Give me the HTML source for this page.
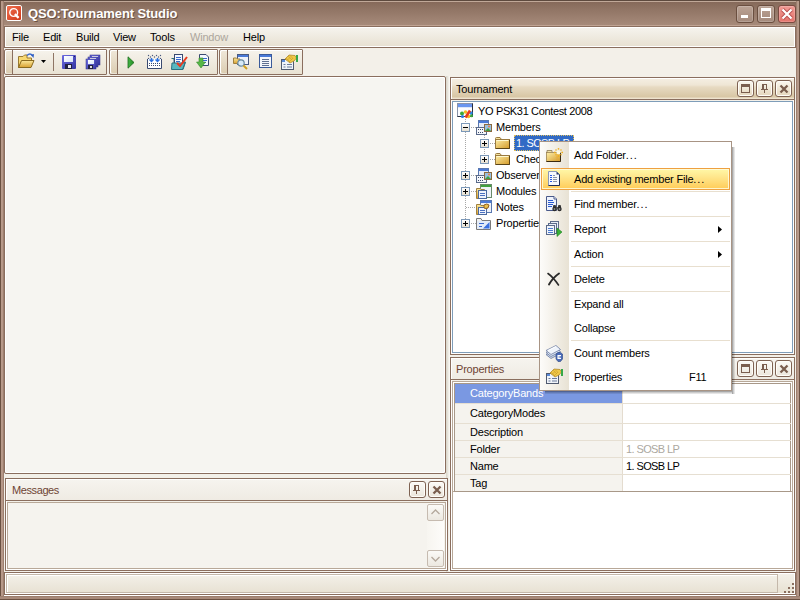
<!DOCTYPE html>
<html><head><meta charset="utf-8">
<style>
*{margin:0;padding:0;box-sizing:border-box}
html,body{width:800px;height:600px;overflow:hidden;background:#f3f0e9}
body{font-family:"Liberation Sans",sans-serif;font-size:11px;line-height:13px;color:#000;position:relative;letter-spacing:-0.2px}
.dots{letter-spacing:0.9px}
.a{position:absolute}
svg{position:absolute;overflow:visible}
#title{left:0;top:0;width:800px;height:26px;background:linear-gradient(#5e4a3e 0,#5e4a3e 1px,#c0a898 1px,#c0a898 2px,#86695a 2px,#8c7060 6px,#a68a7a 25px,#c0a494 25px)}
#ttext{letter-spacing:-0.1px;left:28px;top:6px;font-weight:bold;font-size:13px;line-height:16px;color:#fff;text-shadow:1px 1px 0 #6a5040}
.box{border:1px solid #8a6e5e;box-shadow:inset 1px 1px 0 #fff,inset -1px -1px 0 #fff}
#menubar{left:4px;top:26px;width:792px;height:22px;background:linear-gradient(#f6f4ef,#e7e0d1)}
.mi{top:31px}
.tb{top:49px;height:26px;background:linear-gradient(#f6f3ec,#e9e2d3);border:1px solid #8a6e5e;border-radius:2px 1px 1px 2px;box-shadow:inset 1px 1px 0 #fff}
.grip{left:1px;top:1px;width:7px;height:22px;background:linear-gradient(#efe7d8,#dccdb2);border-radius:2px}
.gripl{left:7px;top:0;width:1px;height:24px;background:#8a6e5e}
.panel{border:1px solid #8a6e5e;border-radius:2px;background:#f6f5f1;box-shadow:inset 1px 1px 0 #fff,inset -1px -1px 0 #fff}
.hdr{background:linear-gradient(#f5efe3 0,#efe6d5 7px,#e7dac2 9px,#d8c6a4 19px,#ece0ca 20px,#efe5d2 21px)}
.hdri{background:linear-gradient(#f6f4ef,#efebe3)}
.pb{width:17px;height:17px;border:1px solid #7e6252;border-radius:3px;background:linear-gradient(#fbf8f0,#e4d6bc);box-shadow:inset 0 0 0 1px #fffdf8}
.pbi{background:linear-gradient(#fbfaf6,#ebe6dc)}
.tbtn{width:18px;height:18px;border:1px solid #6b4f40;border-radius:3px;background:linear-gradient(#bba395,#a48a7c);box-shadow:inset 0 0 0 1px rgba(255,255,255,0.18)}
.exp{width:9px;height:9px;border:1px solid #7b98b8;background:linear-gradient(#fff,#e6dfd0)}
.exp i{position:absolute;background:#000}
.exp i.h{left:1px;top:3px;width:5px;height:1px}
.exp i.v{left:3px;top:1px;width:1px;height:5px}
.mtxt{left:574px}
.sep{left:571px;width:159px;height:1px;background:#e8dfcf}
.grow{left:455px;width:336px;height:1px;background:#e6dfd2}
</style></head><body>
<div id="title" class="a"></div>
<!-- frame -->
<div class="a" style="left:0;top:0;width:4px;height:600px;background:linear-gradient(90deg,#6b5142 0,#6b5142 1px,#b89b8c 1px,#b49686 3px,#9d7f6f 3px)"></div>
<div class="a" style="left:796px;top:0;width:4px;height:600px;background:linear-gradient(90deg,#9d7f6f 0,#9d7f6f 1px,#b49686 1px,#b89b8c 3px,#6b5142 3px)"></div>
<div class="a" style="left:0;top:596px;width:800px;height:4px;background:linear-gradient(#9d7f6f 0,#9d7f6f 1px,#a88a7a 1px,#a88a7a 3px,#6b5142 3px)"></div>
<div class="a" style="left:0;top:0;width:800px;height:1px;background:#5e4a3e"></div>
<!-- app icon -->
<div class="a" style="left:6px;top:5px;width:16px;height:16px;border:1px solid #fff;border-radius:2px;background:linear-gradient(135deg,#f07050,#d03818)"></div>
<svg style="left:6px;top:5px" width="16" height="16"><circle cx="7.7" cy="7.5" r="3.9" fill="none" stroke="#fff" stroke-width="1.4"/><path d="M8.8 9.2 L12.6 12.8" stroke="#fff" stroke-width="2.3"/></svg>
<div id="ttext" class="a">QSO:Tournament Studio</div>
<!-- title buttons -->
<div class="a tbtn" style="left:736px;top:5px"></div>
<div class="a" style="left:741px;top:15px;width:7px;height:3px;background:#fff"></div>
<div class="a tbtn" style="left:757px;top:5px"></div>
<div class="a" style="left:761px;top:8px;width:10px;height:10px;border:1px solid #fff;border-top-width:3px"></div>
<div class="a tbtn" style="left:778px;top:5px;background:linear-gradient(#f09a94,#e4746c);border-color:#7a4a40"></div>
<svg style="left:778px;top:5px" width="18" height="18"><path d="M4.5 4.5 L13.5 13.5 M13.5 4.5 L4.5 13.5" stroke="#b85050" stroke-width="4"/><path d="M4.5 4.5 L13.5 13.5 M13.5 4.5 L4.5 13.5" stroke="#fff" stroke-width="2.2"/></svg>

<div id="menubar" class="a box"></div>
<div class="a mi" style="left:12px">File</div>
<div class="a mi" style="left:43px">Edit</div>
<div class="a mi" style="left:76px">Build</div>
<div class="a mi" style="left:113px">View</div>
<div class="a mi" style="left:150px">Tools</div>
<div class="a mi" style="left:190px;color:#aca69c">Window</div>
<div class="a mi" style="left:243px">Help</div>

<div class="a tb" style="left:4px;width:103px"><div class="a grip"></div><div class="a gripl"></div></div>
<div class="a tb" style="left:109px;width:109px"><div class="a grip"></div><div class="a gripl"></div></div>
<div class="a tb" style="left:219px;width:84px"><div class="a grip"></div><div class="a gripl"></div></div>

<!-- toolbar icons -->
<svg style="left:18px;top:53px" width="17" height="16">
<path d="M0.5 3.5 H5 L6.5 2 H9 V5 H13.5 V8 H4 L1 14.5 H0.5Z" fill="#f8d870" stroke="#9a7a30"/>
<path d="M3.5 7.5 H16 L13 14.5 H0.5Z" fill="url(#gf)" stroke="#8a6a20"/>
<path d="M9 2.5 Q12 -0.5 14.5 2.5" stroke="#3a6ad0" stroke-width="1.5" fill="none"/><path d="M13 2 L16 1 L15.5 5Z" fill="#2a5ac0"/>
</svg>
<svg style="left:41px;top:60px" width="6" height="4"><path d="M0 0 H5 L2.5 3Z" fill="#000"/></svg>
<div class="a" style="left:53px;top:53px;width:1px;height:18px;background:#8e7565"></div>
<svg style="left:62px;top:55px" width="14" height="14"><defs><linearGradient id="gd1" x1="0" y1="0" x2="1" y2="1"><stop offset="0" stop-color="#6a6ae0"/><stop offset="1" stop-color="#3434a0"/></linearGradient></defs><rect x="0" y="0" width="14" height="14" rx="1" fill="url(#gd1)"/><rect x="2" y="1" width="9" height="6" fill="url(#gw)"/><rect x="3" y="9" width="7" height="5" fill="#202040"/><rect x="6" y="10" width="3" height="3" fill="#e8e8f0"/><rect x="12" y="1" width="1" height="1" fill="#202060"/></svg>
<svg style="left:86px;top:55px" width="14" height="14"><defs><linearGradient id="gd" x1="0" y1="0" x2="1" y2="1"><stop offset="0" stop-color="#7070e0"/><stop offset="1" stop-color="#3a3aa8"/></linearGradient></defs><rect x="4" y="0" width="10" height="10" fill="url(#gd)" stroke="#2a2a80" stroke-width="0.5"/><rect x="6" y="1" width="6" height="2" fill="#fff"/><rect x="2" y="2" width="10" height="10" fill="url(#gd)" stroke="#2a2a80" stroke-width="0.5"/><rect x="4" y="3" width="6" height="2" fill="#fff"/><rect x="0" y="4" width="10" height="10" fill="url(#gd)" stroke="#2a2a80" stroke-width="0.5"/><rect x="2" y="5" width="6" height="4" fill="url(#gw)"/><rect x="2" y="10" width="5" height="4" fill="#202040"/><rect x="4" y="11" width="2" height="2" fill="#ddd"/></svg>
<svg style="left:127px;top:56px" width="8" height="13"><defs><linearGradient id="gp" x1="0" y1="0" x2="1" y2="0"><stop offset="0" stop-color="#48b848"/><stop offset="1" stop-color="#208a20"/></linearGradient></defs><path d="M1 0.8 L7 6.5 L1 12.2Z" fill="url(#gp)" stroke="#1a6a1a" stroke-width="0.8"/></svg>
<svg style="left:147px;top:54px" width="16" height="15">
<g fill="#4a5a80"><circle cx="1.5" cy="1.5" r="0.7"/><circle cx="5.5" cy="1.5" r="0.7"/><circle cx="9.5" cy="1.5" r="0.7"/><circle cx="13.5" cy="1.5" r="0.7"/><circle cx="3.5" cy="3" r="0.7"/><circle cx="7.5" cy="3" r="0.7"/><circle cx="11.5" cy="3" r="0.7"/><circle cx="1.5" cy="4.5" r="0.7"/><circle cx="13.5" cy="4.5" r="0.7"/></g>
<path d="M0.5 5 V14.5 H14.5 V5" stroke="#3a4a70" fill="#fff"/>
<g fill="#3a4a70"><rect x="2" y="9" width="1" height="1"/><rect x="4" y="9" width="1" height="1"/><rect x="6" y="9" width="1" height="1"/><rect x="8" y="9" width="1" height="1"/><rect x="10" y="9" width="1" height="1"/><rect x="12" y="9" width="1" height="1"/><rect x="2" y="11" width="1" height="1"/><rect x="4" y="11" width="1" height="1"/><rect x="6" y="11" width="1" height="1"/><rect x="8" y="11" width="1" height="1"/><rect x="10" y="11" width="1" height="1"/><rect x="12" y="11" width="1" height="1"/></g>
<path d="M4.5 4 V7 M2.5 5.5 L4.5 7.5 L6.5 5.5 M10.5 4 V7 M8.5 5.5 L10.5 7.5 L12.5 5.5" stroke="#2a70e0" stroke-width="1.4" fill="none"/>
</svg>
<svg style="left:171px;top:54px" width="17" height="16">
<path d="M0.5 4.5 H3 V15.5 H12 L14.5 8 H10" fill="#50b0b8" stroke="#307080"/>
<rect x="3.5" y="0.5" width="8" height="10" fill="#f4f8ff" stroke="#3a4a70"/><path d="M5 3.5 H10 M5 5.5 H10 M5 7.5 H9" stroke="#3a6ad0"/>
<path d="M1 9 H14 L11.5 15.5 H0.5Z" fill="#58b8c0" stroke="#2a7080"/>
<path d="M6 9 L9 12 L16 3" stroke="#e83a20" stroke-width="2" fill="none"/>
</svg>
<svg style="left:196px;top:54px" width="13" height="15">
<path d="M3.5 0.5 H10 L12.5 3 V11.5 H3.5Z" fill="#f4f8ff" stroke="#3a4a70"/><path d="M5 4.5 H11 M5 6.5 H11 M5 8.5 H10" stroke="#3a6ad0"/>
<path d="M3 4 H7 V8 H9.5 L5 14 L0.5 8 H3Z" fill="#58b848" stroke="#3a8a30" stroke-width="0.6"/>
</svg>
<svg style="left:233px;top:54px" width="17" height="16">
<rect x="4.5" y="0.5" width="11" height="10" fill="#eef2fa" stroke="#4a5a80"/><rect x="5" y="1" width="10" height="2" fill="#4a7ad8"/>
<path d="M0.5 4 H3.5 L4.5 5 H7 V9.5 H0.5Z" fill="url(#gf)" stroke="#a08040"/>
<circle cx="8" cy="9" r="3.2" fill="#d8eaf8" stroke="#6a8aa0" stroke-width="1.2"/>
<path d="M10.5 11.5 L14 15" stroke="#d0a020" stroke-width="2"/>
</svg>
<svg style="left:259px;top:54px" width="13" height="14"><rect x="0.5" y="0.5" width="12" height="13" fill="#f4f6fa" stroke="#3a5a9a"/><rect x="1" y="1" width="11" height="2" fill="#4a7ad8"/><path d="M3 5.5 H10 M3 7.5 H10 M3 9.5 H10 M3 11.5 H10" stroke="#607090"/></svg>
<svg style="left:280px;top:54px" width="18" height="17"><rect x="1.5" y="5.5" width="12" height="10" fill="#f0f4fa" stroke="#505a70"/><rect x="2" y="6" width="3" height="2" fill="#5a8ad8"/><path d="M3.5 10.5 H5.5 M7 10.5 H12 M3.5 13 H5.5 M7 13 H12" stroke="#6a7a9a"/><path d="M5 5 L9 1 L15 1.5 L16.5 4 L14 7 L10 9Z" fill="#f0c848" stroke="#a88020" stroke-width="0.7"/><path d="M6 4 L10 8 M8 2 L12 6 M10 1.5 L13 4.5 M7 6.5 L10 3.5 M9 8 L13 4" stroke="#c89a28" stroke-width="0.6"/><rect x="16" y="1" width="2" height="7" fill="#38a848"/></svg>

<!-- document area -->
<div class="a" style="left:446px;top:76px;width:4px;height:496px;background:linear-gradient(90deg,#d9d5c9,#e4e1d8 35%,#f3f1eb 70%,#fbfaf7)"></div>
<div class="a panel" style="left:4px;top:76px;width:442px;height:398px"></div>
<!-- messages -->
<div class="a box" style="left:5px;top:478px;width:443px;height:93px;background:#f3f0e9"></div>
<div class="a hdri" style="left:6px;top:479px;width:441px;height:22px;border-bottom:1px solid #8a6e5e;box-shadow:inset 1px 1px 0 #fff"></div>
<div class="a" style="left:12px;top:484px;color:#6e4434;letter-spacing:-0.4px">Messages</div>
<div class="a pb pbi" style="left:409px;top:481px"></div>
<div class="a pb pbi" style="left:428px;top:481px"></div>
<div class="a" style="left:7px;top:502px;width:439px;height:67px;border:1px solid #b8a898;background:#f5f3ee"></div>

<!-- tournament -->
<div class="a box" style="left:450px;top:77px;width:345px;height:278px;background:#f3f0e9"></div>
<div class="a hdr" style="left:451px;top:78px;width:343px;height:22px;border-bottom:1px solid #8a6e5e;box-shadow:inset 1px 1px 0 #fff"></div>
<div class="a" style="left:456px;top:83px">Tournament</div>
<div class="a pb" style="left:737px;top:80px"></div>
<div class="a pb" style="left:756px;top:80px"></div>
<div class="a pb" style="left:775px;top:80px"></div>
<div class="a" style="left:452px;top:101px;width:341px;height:252px;border:1px solid #7f9db9;background:#fff"></div>

<!-- tree lines -->
<svg style="left:0;top:0" width="800" height="600">
<g stroke="#a8a8a8" stroke-width="1" stroke-dasharray="1 1" fill="none">
<path d="M465.5 119 V123 M465.5 132 V224 M471 127.5 H476 M484.5 135 V155 M490 143.5 H495 M490 159.5 H495 M471 175.5 H476 M471 191.5 H476 M466 207.5 H476 M471 223.5 H476"/>
</g>
</svg>
<!-- expanders -->
<div class="a exp" style="left:461px;top:123px"><i class="h"></i></div>
<div class="a exp" style="left:480px;top:139px"><i class="h"></i><i class="v"></i></div>
<div class="a exp" style="left:480px;top:155px"><i class="h"></i><i class="v"></i></div>
<div class="a exp" style="left:461px;top:171px"><i class="h"></i><i class="v"></i></div>
<div class="a exp" style="left:461px;top:187px"><i class="h"></i><i class="v"></i></div>
<div class="a exp" style="left:461px;top:219px"><i class="h"></i><i class="v"></i></div>
<!-- tree icons -->
<svg style="left:457px;top:103px" width="17" height="16">
<rect x="0.5" y="0.5" width="15" height="13" fill="#fbfcff" stroke="#8a94aa"/>
<path d="M15.5 0.5 V13.5 H0.5" stroke="#2a3040" fill="none"/>
<rect x="1" y="1" width="14" height="3" fill="#6a96f0"/><rect x="1" y="4" width="14" height="1" fill="#dce6f8"/>
<circle cx="5" cy="10.5" r="2" fill="#3aa83a"/><circle cx="8.5" cy="9" r="1.8" fill="#f4c020"/>
<circle cx="5.5" cy="13.5" r="1.6" fill="#2a7ae0"/><circle cx="11.5" cy="13.5" r="1.8" fill="#f4b820"/>
<circle cx="14" cy="10" r="1.7" fill="#2a8ae8"/><circle cx="14.5" cy="12.8" r="1.5" fill="#3aa83a"/>
<path d="M8.5 14.5 L13 7.5" stroke="#e83a20" stroke-width="2.6"/>
</svg>
<svg width="0" height="0"><defs>
<linearGradient id="gw" x1="0" y1="0" x2="1" y2="1"><stop offset="0" stop-color="#fff"/><stop offset="1" stop-color="#d8e4f8"/></linearGradient>
<linearGradient id="gfd" x1="0" y1="0" x2="1" y2="1"><stop offset="0" stop-color="#fdeea8"/><stop offset="1" stop-color="#d49a28"/></linearGradient>
<linearGradient id="gf" x1="0" y1="0" x2="0" y2="1"><stop offset="0" stop-color="#fce89c"/><stop offset="1" stop-color="#d8a030"/></linearGradient>
</defs></svg>
<!-- Members icon -->
<svg style="left:476px;top:120px" width="16" height="16">
<rect x="2.5" y="0.5" width="10" height="8" fill="#e8eef8" stroke="#5a78b0"/><rect x="3" y="1" width="9" height="2" fill="#4a7ad8"/>
<rect x="0.5" y="7.5" width="10" height="7" fill="#f4f6fa" stroke="#5a6a8a"/>
<g fill="#3a4a6a"><rect x="2" y="9" width="1" height="1"/><rect x="4" y="9" width="1" height="1"/><rect x="6" y="9" width="1" height="1"/><rect x="2" y="12" width="1" height="1"/><rect x="4" y="12" width="1" height="1"/><rect x="6" y="12" width="1" height="1"/></g>
<rect x="8.5" y="4.5" width="7" height="7" fill="#9ac0e0" stroke="#8a6a40"/><path d="M9 11 L12 8 L15 11Z" fill="#40a040"/><circle cx="13" cy="6.5" r="1" fill="#f08040"/>
</svg>
<!-- folders -->
<svg style="left:495px;top:137px" width="16" height="13"><path d="M0.5 3 V1.5 Q0.5 0.5 1.5 0.5 H5 L6.5 2.5" fill="#f6e4a0" stroke="#9a7a40"/><rect x="0.5" y="2.5" width="14" height="9" fill="url(#gfd)" stroke="#9a7a40"/><path d="M14.5 3 V11.5 H1" stroke="#5a4418" fill="none"/><path d="M1.5 3.5 H13.5" stroke="#fff8d0"/></svg>
<svg style="left:495px;top:153px" width="16" height="13"><path d="M0.5 3 V1.5 Q0.5 0.5 1.5 0.5 H5 L6.5 2.5" fill="#f6e4a0" stroke="#9a7a40"/><rect x="0.5" y="2.5" width="14" height="9" fill="url(#gfd)" stroke="#9a7a40"/><path d="M14.5 3 V11.5 H1" stroke="#5a4418" fill="none"/><path d="M1.5 3.5 H13.5" stroke="#fff8d0"/></svg>
<!-- Observers icon -->
<svg style="left:476px;top:168px" width="16" height="16">
<rect x="2.5" y="0.5" width="10" height="8" fill="#e8eef8" stroke="#5a78b0"/><rect x="3" y="1" width="9" height="2" fill="#4a7ad8"/>
<rect x="0.5" y="7.5" width="10" height="7" fill="#f4f6fa" stroke="#5a6a8a"/>
<g fill="#3a4a6a"><rect x="2" y="9" width="1" height="1"/><rect x="4" y="9" width="1" height="1"/><rect x="6" y="9" width="1" height="1"/><rect x="2" y="12" width="1" height="1"/><rect x="4" y="12" width="1" height="1"/><rect x="6" y="12" width="1" height="1"/></g>
<rect x="8.5" y="4.5" width="7" height="7" fill="#9ac0e0" stroke="#8a6a40"/><path d="M9 11 L12 8 L15 11Z" fill="#40a040"/><circle cx="13" cy="6.5" r="1" fill="#f08040"/>
</svg>
<!-- Modules icon -->
<svg style="left:476px;top:184px" width="16" height="16">
<rect x="4.5" y="0.5" width="11" height="13" fill="#eef2f8" stroke="#6a8a6a"/><rect x="5" y="1" width="10" height="2" fill="#40a040"/>
<path d="M0.5 4.5 H4 L5 5.5 H8.5 V14.5 H0.5Z" fill="url(#gf)" stroke="#a08040"/>
<rect x="2.5" y="6.5" width="8" height="8" fill="#f0f4fc" stroke="#4a6aa0"/><path d="M4 9.5 H9 M4 11.5 H9" stroke="#4a70c0"/>
</svg>
<!-- Notes icon -->
<svg style="left:476px;top:200px" width="16" height="16">
<rect x="4.5" y="0.5" width="11" height="12" fill="#eef2f8" stroke="#5a78b0"/><rect x="5" y="1" width="10" height="2" fill="#4a7ad8"/>
<path d="M0.5 4.5 H4 L5 5.5 H8.5 V14.5 H0.5Z" fill="url(#gf)" stroke="#a08040"/>
<rect x="2.5" y="7.5" width="8" height="7" fill="#f0f4fc" stroke="#4a6aa0"/><path d="M4 10.5 H9 M4 12.5 H9" stroke="#4a70c0"/>
<path d="M8 5 Q11 3 13 5 L12 8 Q10 9 8 8Z" fill="#e8c050" stroke="#906020"/>
</svg>
<!-- Properties icon -->
<svg style="left:476px;top:216px" width="16" height="16">
<path d="M0.5 2.5 H5 L6 4.5 H14.5 V13.5 H0.5Z" fill="#f0f0f0" stroke="#7a7a7a"/>
<rect x="1" y="5" width="13" height="8" fill="#e4ecf8"/>
<path d="M3 7.5 H8 M3 10.5 H6" stroke="#3a6ad0"/>
<path d="M7 12.5 L13.5 6 V12.5Z" fill="#3a70e0"/>
</svg>
<!-- tree text -->
<div class="a" style="left:478px;top:105px;letter-spacing:-0.35px">YO PSK31 Contest 2008</div>
<div class="a" style="left:496px;top:121px">Members</div>
<div class="a" style="left:514px;top:135px;width:60px;height:16px;background:#316ac5;outline:1px dotted #e0c060;outline-offset:-1px"></div>
<div class="a" style="left:516px;top:137px;color:#fff;letter-spacing:-0.6px">1. SOSB LP</div>
<div class="a" style="left:516px;top:153px">Check</div>
<div class="a" style="left:496px;top:169px">Observers</div>
<div class="a" style="left:496px;top:185px">Modules</div>
<div class="a" style="left:496px;top:201px">Notes</div>
<div class="a" style="left:496px;top:217px">Properties</div>

<!-- properties -->
<div class="a box" style="left:450px;top:357px;width:345px;height:214px;background:#f3f0e9"></div>
<div class="a hdri" style="left:451px;top:358px;width:343px;height:22px;border-bottom:1px solid #8a6e5e;box-shadow:inset 1px 1px 0 #fff"></div>
<div class="a" style="left:456px;top:363px;color:#6e4434">Properties</div>
<div class="a pb pbi" style="left:737px;top:360px"></div>
<div class="a pb pbi" style="left:756px;top:360px"></div>
<div class="a pb pbi" style="left:775px;top:360px"></div>
<div class="a" style="left:452px;top:381px;width:341px;height:188px;border:1px solid #b8a898;background:#fff"></div>
<!-- status bar -->
<div class="a box" style="left:4px;top:572px;width:792px;height:23px;background:linear-gradient(#f4f1ea,#e7e0d0)"></div>
<div class="a" style="left:4px;top:595px;width:792px;height:1px;background:#fff"></div>
<div class="a" style="left:6px;top:574px;width:772px;height:19px;border:1px solid #c4b8aa;box-shadow:inset 1px 1px 0 #fff;background:linear-gradient(#f3f0e8,#e8e2d4)"></div>

<!-- pane button glyphs -->
<svg style="left:0;top:0" width="800" height="600">
<g fill="#7a5e4e">
<rect x="741" y="84" width="9" height="3"/><rect x="741" y="87" width="1" height="5"/><rect x="749" y="87" width="1" height="5"/><rect x="741" y="92" width="9" height="1"/><rect x="762" y="84" width="5" height="1"/><rect x="762" y="85" width="2" height="4"/><rect x="766" y="85" width="1" height="4"/><rect x="761" y="89" width="7" height="1"/><rect x="764" y="90" width="1" height="3"/><rect x="741" y="364" width="9" height="3"/><rect x="741" y="367" width="1" height="5"/><rect x="749" y="367" width="1" height="5"/><rect x="741" y="372" width="9" height="1"/><rect x="762" y="364" width="5" height="1"/><rect x="762" y="365" width="2" height="4"/><rect x="766" y="365" width="1" height="4"/><rect x="761" y="369" width="7" height="1"/><rect x="764" y="370" width="1" height="3"/><rect x="414" y="485" width="5" height="1"/><rect x="414" y="486" width="2" height="4"/><rect x="418" y="486" width="1" height="4"/><rect x="413" y="490" width="7" height="1"/><rect x="416" y="491" width="1" height="3"/>
</g>
<g stroke="#7a5e4e" stroke-width="2.3">
<path d="M780.5 85.5 L787.5 92.5 M787.5 85.5 L780.5 92.5"/><path d="M780.5 365.5 L787.5 372.5 M787.5 365.5 L780.5 372.5"/><path d="M433.5 486.5 L440.5 493.5 M440.5 486.5 L433.5 493.5"/>
</g>
</svg>
<!-- messages scrollbar -->
<div class="a" style="left:427px;top:503px;width:17px;height:65px;background:linear-gradient(90deg,#f7f5f0,#fdfcfa)"></div>
<div class="a" style="left:427px;top:504px;width:17px;height:17px;border:1px solid #c6bbb0;border-radius:2px;background:linear-gradient(#fbfaf7,#ece8e0)"></div>
<div class="a" style="left:427px;top:550px;width:17px;height:17px;border:1px solid #c6bbb0;border-radius:2px;background:linear-gradient(#fbfaf7,#ece8e0)"></div>
<svg style="left:427px;top:504px" width="17" height="63"><path d="M4.5 10 L8.5 6 L12.5 10" stroke="#b4a89c" stroke-width="1.3" fill="none"/><path d="M4.5 53 L8.5 57 L12.5 53" stroke="#b4a89c" stroke-width="1.3" fill="none"/></svg>
<!-- status grip -->
<svg style="left:784px;top:581px" width="12" height="12"><g fill="#8a6e5e"><rect x="8" y="2" width="2" height="2"/><rect x="4" y="6" width="2" height="2"/><rect x="8" y="6" width="2" height="2"/><rect x="0" y="10" width="2" height="2"/><rect x="4" y="10" width="2" height="2"/><rect x="8" y="10" width="2" height="2"/></g></svg>

<!-- property grid -->
<div class="a" style="left:452px;top:381px;width:341px;height:111px;border:1px solid #b8a898;background:#fff"></div>
<div class="a" style="left:454px;top:383px;width:337px;height:109px;border:1px solid #a89888;background:#f5f3ee"></div>
<div class="a" style="left:623px;top:384px;width:167px;height:107px;background:#fff"></div>
<div class="a" style="left:455px;top:384px;width:167px;height:19px;background:#7a98e2"></div>
<div class="a" style="left:622px;top:384px;width:1px;height:107px;background:#e4dccf"></div>
<div class="a grow" style="top:403px"></div>
<div class="a grow" style="top:423px"></div>
<div class="a grow" style="top:440px"></div>
<div class="a grow" style="top:457px"></div>
<div class="a grow" style="top:474px"></div>
<div class="a" style="left:470px;top:387px;color:#fff">CategoryBands</div>
<div class="a" style="left:470px;top:407px">CategoryModes</div>
<div class="a" style="left:470px;top:426px">Description</div>
<div class="a" style="left:470px;top:443px">Folder</div>
<div class="a" style="left:470px;top:460px">Name</div>
<div class="a" style="left:470px;top:477px">Tag</div>
<div class="a" style="left:626px;top:443px;color:#aca89f;letter-spacing:-0.6px">1. SOSB LP</div>
<div class="a" style="left:626px;top:460px;letter-spacing:-0.6px">1. SOSB LP</div>

<!-- context menu -->
<div class="a" style="left:732px;top:147px;width:3px;height:247px;background:linear-gradient(90deg,rgba(0,0,0,0.42),rgba(0,0,0,0.2) 50%,rgba(0,0,0,0.05))"></div>
<div class="a" style="left:545px;top:391px;width:187px;height:3px;background:linear-gradient(rgba(0,0,0,0.42),rgba(0,0,0,0.2) 50%,rgba(0,0,0,0.05))"></div>
<div class="a" style="left:539px;top:141px;width:193px;height:250px;border:1px solid #a89484;background:#fff"></div>
<div class="a" style="left:540px;top:142px;width:29px;height:248px;background:linear-gradient(90deg,#fdfcfa,#e8e2d4)"></div>
<div class="a" style="left:541px;top:168px;width:189px;height:22px;border:1px solid #eea040;box-shadow:inset 0 0 0 1px rgba(255,252,220,0.85);background:linear-gradient(#fff8a8,#ffe488 45%,#ffcc58)"></div>
<div class="a sep" style="top:191px"></div>
<div class="a sep" style="top:216px"></div>
<div class="a sep" style="top:241px"></div>
<div class="a sep" style="top:266px"></div>
<div class="a sep" style="top:291px"></div>
<div class="a sep" style="top:340px"></div>
<div class="a mtxt" style="top:149px">Add Folder<span class="dots">...</span></div>
<div class="a mtxt" style="top:173px">Add existing member File<span class="dots">...</span></div>
<div class="a mtxt" style="top:198px">Find member<span class="dots">...</span></div>
<div class="a mtxt" style="top:223px">Report</div>
<div class="a mtxt" style="top:248px">Action</div>
<div class="a mtxt" style="top:273px">Delete</div>
<div class="a mtxt" style="top:298px">Expand all</div>
<div class="a mtxt" style="top:322px">Collapse</div>
<div class="a mtxt" style="top:347px">Count members</div>
<div class="a mtxt" style="top:371px">Properties</div>
<div class="a" style="left:689px;top:371px">F11</div>
<svg style="left:718px;top:226px" width="5" height="8"><path d="M0 0 L4 3.5 L0 7Z" fill="#000"/></svg>
<svg style="left:718px;top:251px" width="5" height="8"><path d="M0 0 L4 3.5 L0 7Z" fill="#000"/></svg>
<!-- menu icons -->
<svg style="left:546px;top:148px" width="17" height="16"><path d="M1 5 V2.5 H6 V4" fill="#f4e4a8" stroke="#8a7a58" stroke-width="0.8"/><rect x="0.5" y="4.5" width="14" height="9" fill="url(#gfd)" stroke="#9a8050" stroke-width="0.8"/><path d="M0.5 13.5 H14.5 V5" stroke="#3a2a10" fill="none"/><path d="M12 5.5 L10 10 M13 6 L10.5 12" stroke="#e8a830" stroke-width="0.7" opacity="0.6"/><g fill="#f0b020"><circle cx="12.5" cy="0.8" r="0.9"/><circle cx="12.5" cy="8" r="0.9"/><circle cx="8.8" cy="4.4" r="0.9"/><circle cx="16.2" cy="4.4" r="0.9"/><circle cx="10" cy="2" r="0.8"/><circle cx="15" cy="2" r="0.8"/><circle cx="10" cy="6.8" r="0.8"/><circle cx="15" cy="6.8" r="0.8"/></g><circle cx="12.5" cy="4.4" r="1.9" fill="#fffbe0"/></svg>
<svg style="left:548px;top:171px" width="13" height="15"><path d="M0.5 0.5 H8.5 L11.5 3.5 V14.5 H0.5Z" fill="#f6f8fd" stroke="#8a98b8"/><path d="M11.5 3.5 V14.5 H0.5" stroke="#1e2e5a" fill="none"/><path d="M8.5 0.5 L11.5 3.5 H8.5Z" fill="#2a3a6a"/><path d="M2 4.5 H4 M2 6.5 H4 M2 8.5 H4 M2 10.5 H4" stroke="#2a5ae0"/><path d="M5 4.5 H7 M5 6.5 H9 M5 8.5 H9 M5 10.5 H9" stroke="#8a94a8"/></svg>
<svg style="left:546px;top:196px" width="16" height="16"><path d="M0.5 0.5 H8 L10.5 3 V14.5 H0.5Z" fill="#eef3fc" stroke="#4a5a8a"/><path d="M8 0.5 V3 H10.5" fill="#fff" stroke="#4a5a8a"/><path d="M2 4.5 H7 M2 6.5 H8 M2 8.5 H7 M2 10.5 H6" stroke="#2a5ad0"/><rect x="7" y="9" width="3" height="4" rx="1" fill="#3a3a3a"/><rect x="12" y="9" width="3" height="4" rx="1" fill="#3a3a3a"/><circle cx="8.5" cy="13" r="2.2" fill="#2a2a2a"/><circle cx="13.5" cy="13" r="2.2" fill="#2a2a2a"/><rect x="10" y="11" width="2" height="2" fill="#505050"/><circle cx="8.5" cy="13" r="0.9" fill="#8a8a8a"/><circle cx="13.5" cy="13" r="0.9" fill="#8a8a8a"/></svg>
<svg style="left:546px;top:221px" width="18" height="17"><rect x="4.5" y="0.5" width="8" height="10" fill="#e8eef8" stroke="#5a6a8a"/><rect x="2.5" y="2.5" width="8" height="10" fill="#e8eef8" stroke="#5a6a8a"/><rect x="0.5" y="4.5" width="8" height="9" fill="#f0f4fc" stroke="#5a6a8a"/><path d="M2 7.5 H7 M2 9.5 H7 M2 11.5 H7" stroke="#4a7ad0"/><path d="M11 7 L16 11 L11 15.5Z" fill="#38b038" stroke="#208020" stroke-width="0.6"/></svg>
<svg style="left:546px;top:272px" width="14" height="14"><path d="M2 1.5 Q7 5 12.5 13" stroke="#2a2a2a" stroke-width="1.6" fill="none" stroke-linecap="round"/><path d="M13 1.5 Q7 5.5 3 12.5" stroke="#2a2a2a" stroke-width="1.9" fill="none" stroke-linecap="round"/></svg>
<svg style="left:545px;top:344px" width="18" height="18"><path d="M1 10.5 L11 5.5 L15.5 9.5 L6 14.5Z" fill="#c8d4e8" stroke="#6a7aa0" stroke-width="0.8"/><path d="M1 8.5 L11 3.5 L15.5 7.5 L6 12.5Z" fill="#dde6f4" stroke="#6a7aa0" stroke-width="0.8"/><path d="M1 6.5 L11 1.5 L15.5 5.5 L6 10.5Z" fill="#eef3fb" stroke="#6a7aa0" stroke-width="0.8"/><path d="M3 6.5 L11 2.5" stroke="#fff"/><path d="M11 10 L13 8.5 H15.5 L17.5 10 V15 L15.5 17.5 H13 L11 15Z" fill="#4a6ab8" stroke="#34508a" stroke-width="0.7"/><path d="M16 11.5 H13 V14.5 H16 M13 13 H15.5" stroke="#fff" stroke-width="1.1" fill="none"/></svg>
<svg style="left:545px;top:368px" width="18" height="17"><rect x="1.5" y="5.5" width="12" height="10" fill="#f0f4fa" stroke="#505a70"/><rect x="2" y="6" width="3" height="2" fill="#5a8ad8"/><path d="M3.5 10.5 H5.5 M7 10.5 H12 M3.5 13 H5.5 M7 13 H12" stroke="#6a7a9a"/><path d="M5 5 L9 1 L15 1.5 L16.5 4 L14 7 L10 9Z" fill="#f0c848" stroke="#a88020" stroke-width="0.7"/><path d="M6 4 L10 8 M8 2 L12 6 M10 1.5 L13 4.5 M7 6.5 L10 3.5 M9 8 L13 4" stroke="#c89a28" stroke-width="0.6"/><rect x="16" y="1" width="2" height="7" fill="#38a848"/></svg>

</body></html>
